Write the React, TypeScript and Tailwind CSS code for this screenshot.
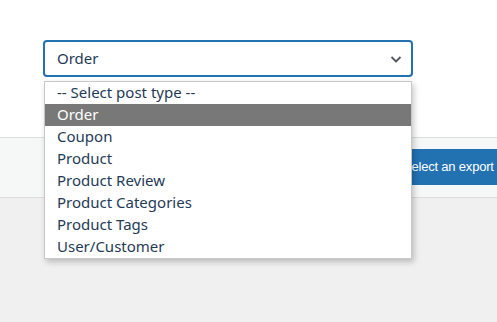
import React from "react";

const items = [
  "-- Select post type --",
  "Order",
  "Coupon",
  "Product",
  "Product Review",
  "Product Categories",
  "Product Tags",
  "User/Customer",
];

export default function App() {
  return (
    <div
      className="relative w-[497px] h-[322px] overflow-hidden bg-[#f0f0f1]"
      style={{ fontFamily: '"Noto Sans", "Open Sans", sans-serif' }}
    >
      <div className="h-[138px] bg-white border-b border-[#dcdcde] pt-[40px] pl-[43px]">
        <div className="w-[370px] h-[37px] border-2 border-[#2271b1] rounded-[4px] flex items-center justify-between pl-[12px] pr-[8px] text-[15px] text-[#1f3b57]">
          <span>Order</span>
          <svg width="14" height="14" viewBox="0 0 14 14" fill="none">
            <path d="M2.5 5 L7 9.5 L11.5 5" stroke="#50575e" strokeWidth="1.8" />
          </svg>
        </div>
      </div>
      <div className="h-[60px] bg-[#f6f7f7] border-b border-[#dcdcde] flex items-center">
        <div className="ml-[393px] mt-[-2px] h-[36px] w-[120px] bg-[#2271b1] text-white text-[13px] tracking-[-0.2px] font-['Liberation_Sans',sans-serif] flex items-center pl-[10px] whitespace-nowrap rounded-l-[3px]">
          Select an export
        </div>
      </div>
      <div
        className="absolute left-[44px] top-[81px] w-[368px] bg-white border border-[#c8c8c8] shadow-[2px_3px_6px_rgba(0,0,0,0.22)] text-[15px] text-[#1f3b57]"
      >
        {items.map((it, i) => (
          <div
            key={it}
            className={
              "h-[22px] leading-[20px] pl-[12px] " +
              (i === 1 ? "bg-[#787878] text-white" : "")
            }
          >
            {it}
          </div>
        ))}
      </div>
    </div>
  );
}
